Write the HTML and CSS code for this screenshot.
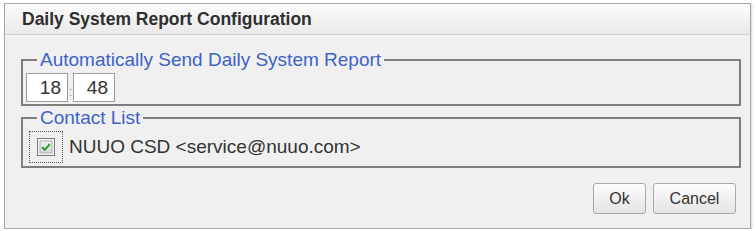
FILE: index.html
```html
<!DOCTYPE html>
<html>
<head>
<meta charset="utf-8">
<title>Daily System Report Configuration</title>
<link rel="stylesheet" href="styles.css">
</head>
<body>
<div class="dialog">
	<div class="dlgHead">Daily System Report Configuration</div>
	<div class="dlgBody">
		<fieldset class="grp">
			<legend>Automatically Send Daily System Report</legend>
			<div class="timeRow">
				<input class="timeBox" type="text" value="18" size="2">
				<span class="colon">:</span>
				<input class="timeBox" type="text" value="48" size="2">
			</div>
		</fieldset>
		<fieldset class="grp grp2">
			<legend>Contact List</legend>
			<div class="contactRow">
				<span class="chkFocus">
					<svg class="chk" width="18" height="18" viewBox="0 0 18 18">
						<defs>
							<linearGradient id="chkFill" x1="0" y1="0" x2="0" y2="1">
								<stop offset="0" stop-color="#eef3ee"/>
								<stop offset="1" stop-color="#cfdccf"/>
							</linearGradient>
						</defs>
						<rect x="0.5" y="0.5" width="17" height="17" fill="#f4f4f4" stroke="#7b7b7b"/>
						<rect x="3" y="3" width="12" height="12" fill="url(#chkFill)" stroke="#a9b5a9"/>
						<path d="M5.2 9.2 L7.8 11.8 L12.8 6.2" fill="none" stroke="#2f9a2f" stroke-width="2"/>
					</svg>
				</span>
				<span class="contactName">NUUO CSD &lt;service@nuuo.com&gt;</span>
			</div>
		</fieldset>
		<div class="btnRow">
			<button class="btn btnOk" type="button">Ok</button>
			<button class="btn btnCancel" type="button">Cancel</button>
		</div>
	</div>
</div>
</body>
</html>
```

FILE: styles.css
```css
html, body {
	margin: 0;
	padding: 0;
	background: #ffffff;
}
body {
	font-family: "Liberation Sans", Arial, Helvetica, sans-serif;
	color: #333333;
}
.dialog {
	margin: 3px 0 0 4px;
	width: 745px;
	border: 1px solid #a7a7a7;
	background: #f0f0f0;
	box-shadow: 1px 1px 2px rgba(0,0,0,0.18);
}
.dlgHead {
	height: 30px;
	line-height: 30px;
	padding-left: 17px;
	font-size: 17.5px;
	font-weight: bold;
	color: #2f2f2f;
	background: linear-gradient(#fbfbfb, #e9e9e9);
	border-bottom: 1px solid #cfcfcf;
}
.dlgBody {
	padding: 14px 0 14px 0;
}
.grp {
	margin: 0 9px 0 16px;
	padding: 2px 3px 2px 3px;
	border: 2px solid #7f7f7f;
	min-width: 0;
}
.grp legend {
	margin-left: 11px;
	padding: 0 3px;
	font-size: 19px;
	line-height: 22px;
	color: #3d63c9;
}
.grp2 {
	margin-top: 1px;
	padding: 2px 6px 3px 6px;
}
.grp2 legend {
	margin-left: 8px;
}
.timeRow {
	display: flex;
	align-items: center;
}
.timeBox {
	width: 42px;
	height: 29px;
	box-sizing: border-box;
	margin: 0;
	padding: 0 6px 0 0;
	border: 1px solid #9c9c9c;
	background: #ffffff;
	font-family: "Liberation Sans", Arial, Helvetica, sans-serif;
	font-size: 19px;
	color: #333333;
	text-align: right;
	outline: none;
}
.colon {
	width: 5px;
	text-align: center;
	font-size: 13px;
	color: #9a9a9a;
	padding-top: 8px;
}
.contactRow {
	display: flex;
	align-items: center;
	height: 32px;
}
.chkFocus {
	display: flex;
	padding: 6px 7px;
	border: 1px dotted #5c5c5c;
}
.chk {
	display: block;
}
.contactName {
	margin-left: 6px;
	font-size: 19px;
	color: #333333;
}
.btnRow {
	display: flex;
	justify-content: flex-end;
	gap: 7px;
	margin-top: 15px;
	padding-right: 14px;
}
.btn {
	height: 31px;
	margin: 0;
	padding: 0;
	border: 1px solid #a9a9a9;
	border-radius: 3px;
	background: linear-gradient(#fdfdfd, #e4e4e4);
	font-family: "Liberation Sans", Arial, Helvetica, sans-serif;
	font-size: 16px;
	color: #333333;
}
.btnOk {
	width: 53px;
}
.btnCancel {
	width: 83px;
}
```
